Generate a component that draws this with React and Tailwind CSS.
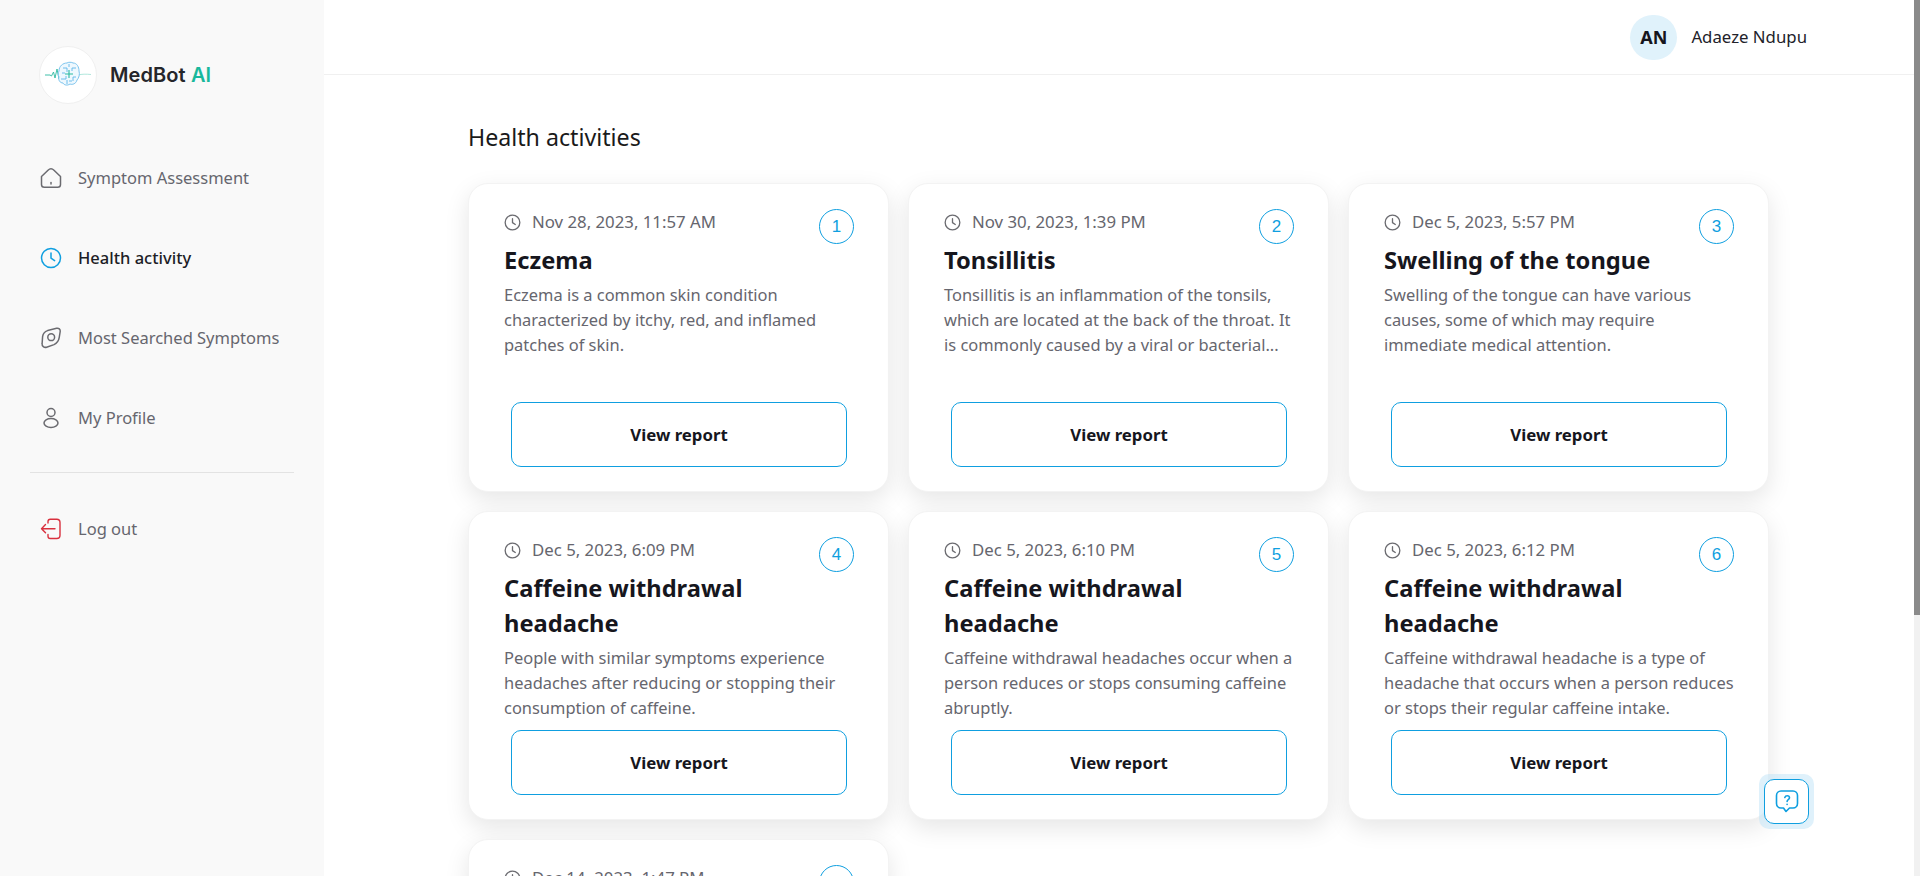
import React from "react";

const font = "font-['Noto_Sans','Open_Sans',sans-serif]";

const cards = [
  { n: 1, date: "Nov 28, 2023, 11:57 AM", title: "Eczema", text: "Eczema is a common skin condition characterized by itchy, red, and inflamed patches of skin." },
  { n: 2, date: "Nov 30, 2023, 1:39 PM", title: "Tonsillitis", text: "Tonsillitis is an inflammation of the tonsils, which are located at the back of the throat. It is commonly caused by a viral or bacterial..." },
  { n: 3, date: "Dec 5, 2023, 5:57 PM", title: "Swelling of the tongue", text: "Swelling of the tongue can have various causes, some of which may require immediate medical attention." },
  { n: 4, date: "Dec 5, 2023, 6:09 PM", title: "Caffeine withdrawal headache", text: "People with similar symptoms experience headaches after reducing or stopping their consumption of caffeine." },
  { n: 5, date: "Dec 5, 2023, 6:10 PM", title: "Caffeine withdrawal headache", text: "Caffeine withdrawal headaches occur when a person reduces or stops consuming caffeine abruptly." },
  { n: 6, date: "Dec 5, 2023, 6:12 PM", title: "Caffeine withdrawal headache", text: "Caffeine withdrawal headache is a type of headache that occurs when a person reduces or stops their regular caffeine intake." },
  { n: 7, date: "Dec 14, 2023, 1:47 PM", title: "", text: "" },
];

function Logo() {
  return (
    <svg width="46" height="30" viewBox="0 0 46 30" fill="none">
      <path d="M0 15h5l1.500 1 2-4 1.500 6 2-9 2 10 1-4" stroke="#2bb9a0" strokeWidth="0.9" />
      <path d="M33 15c4-1 8-1 13-.500" stroke="#8fdccd" strokeWidth="0.7" />
      <path d="M14 11c0-5 4-8 8-8 1-1 5-1 6 0 4 0 6 4 6 8 1 3 0 7-2 9-1 4-5 5-7 4-3 2-6 1-7-1-3 0-5-3-4-6-1-2-1-4 0-6z" stroke="#7cc4ee" strokeWidth="1" fill="#eef8fe" />
      <path d="M18 8h4v4M31 8h-4v3M16 19h5v-3M31 17h-3v4M24 4v3M22 24v-4M17 13h3M27 21h-3" stroke="#5db7ea" strokeWidth="0.9" />
      <path d="M24 10v8M20 14h8" stroke="#2bb9a0" strokeWidth="1.100" />
    </svg>
  );
}

const HomeIcon = () => (
  <svg width="22" height="22" viewBox="0 0 22 22" fill="none" stroke="#6b6b70" strokeWidth="1.5" strokeLinejoin="round" strokeLinecap="round">
    <path d="M1.500 9.500 8 3.200c1.800-1.700 4.200-1.700 6 0l6.500 6.300v8c0 1.700-1.200 2.800-2.800 2.800H4.300c-1.600 0-2.800-1.100-2.800-2.800z" />
    <path d="M11 15.500v1.500" />
  </svg>
);
const ClockIcon = ({ size = 22, color = "#0f9fe0", w = 1.5 }) => (
  <svg width={size} height={size} viewBox="0 0 22 22" fill="none" stroke={color} strokeWidth={w} strokeLinecap="round" strokeLinejoin="round">
    <circle cx="11" cy="11" r="9.500" />
    <path d="M11 6v5.200l3.600 2.400" />
  </svg>
);
const EyeIcon = () => (
  <svg width="22" height="22" viewBox="0 0 22 22" fill="none" stroke="#6b6b70" strokeWidth="1.5" strokeLinejoin="round">
    <path d="M2.600 9.600C3 6.800 4.800 4.600 7.600 3.600l9-2.300c2.200-.5 3.900 1.100 3.600 3.200l-1 6.200c-.5 3-2.300 5.600-5.200 6.900l-7.400 2.600c-2.500.7-4.800-1-4.500-3.500z" />
    <circle cx="11.200" cy="10.200" r="3.400" />
  </svg>
);
const UserIcon = () => (
  <svg width="22" height="22" viewBox="0 0 22 22" fill="none" stroke="#6b6b70" strokeWidth="1.5">
    <circle cx="11" cy="5.500" r="4" />
    <ellipse cx="11" cy="16" rx="7" ry="4.500" />
  </svg>
);
const LogoutIcon = () => (
  <svg width="22" height="22" viewBox="0 0 22 22" fill="none" stroke="#d9303e" strokeWidth="1.400" strokeLinecap="round" strokeLinejoin="round">
    <path d="M8 5V3.500C8 2.200 9 1.200 10.300 1.200h6.500c1.800 0 3.200 1.400 3.200 3.200v12.900c0 1.800-1.400 3.200-3.200 3.200h-6.500C9 20.500 8 19.500 8 18.200V16.500" />
    <path d="M15 10.700H1.500M5.500 6.600l-4 4.100 4 4.100" />
  </svg>
);

function NavItem({ icon, label, active }) {
  return (
    <div className="flex items-center gap-[16px] h-[24px]">
      <span className="w-[22px] h-[22px] flex items-center justify-center shrink-0">{icon}</span>
      <span className={active ? "text-[16.5px] text-[#1d1d26] font-medium" : "text-[16.5px] text-[#66666e]"}>{label}</span>
    </div>
  );
}

function Card({ c }) {
  return (
    <div className="relative h-[309px] rounded-[20px] bg-white border border-[#f3f3f3] shadow-[0_8px_24px_rgba(0,0,0,0.1)] pl-[35px] pr-[31px] pt-[26px] pb-[24px] flex flex-col">
      <span className="absolute top-[25px] right-[34px] w-[35px] h-[35px] rounded-full border border-[#0f9fe0] flex items-center justify-center text-[#0f9fe0] text-[17px] font-['Liberation_Sans',sans-serif]">{c.n}</span>
      <div className="flex items-center gap-[11px] h-[24px]">
        <ClockIcon size={17} color="#6b6b70" w={1.7} />
        <span className="text-[16.8px] text-[#66666e]">{c.date}</span>
      </div>
      <div className="mt-[9px] text-[23.7px] leading-[35px] font-bold text-[#16161d] pr-[44px]">{c.title}</div>
      <p className="text-[16.45px] leading-[25px] text-[#66666e] mt-[4px]">{c.text}</p>
      <div className="mt-auto pl-[7px] pr-[10px]">
        <button className="w-full h-[65px] rounded-[10px] border border-[#0f9fe0] bg-white text-[16.8px] font-bold text-[#16161d]">View report</button>
      </div>
    </div>
  );
}

export default function App() {
  return (
    <div className={`flex h-screen overflow-hidden bg-white ${font}`}>
      <aside className="w-[324px] shrink-0 bg-[#f9f9f9] flex flex-col">
        <div className="pl-[39px] pt-[46px] flex items-center gap-[13px]">
          <div className="w-[58px] h-[58px] rounded-full bg-white border border-[#f0f0f0] flex items-center justify-center">
            <Logo />
          </div>
          <span className="text-[20px] font-semibold tracking-[0.1px] text-[#25262a] font-['Inter',sans-serif]">MedBot <span className="text-[#19b89c]">AI</span></span>
        </div>
        <nav className="pl-[40px] pt-[62px] flex flex-col gap-[56px]">
          <NavItem icon={<HomeIcon />} label="Symptom Assessment" />
          <NavItem active icon={<ClockIcon />} label="Health activity" />
          <NavItem icon={<EyeIcon />} label="Most Searched Symptoms" />
          <NavItem icon={<UserIcon />} label="My Profile" />
        </nav>
        <div className="ml-[30px] w-[264px] h-px bg-[#e3e3e3] mt-[42px]" />
        <div className="pl-[40px] mt-[44px]">
          <NavItem icon={<LogoutIcon />} label="Log out" />
        </div>
      </aside>
      <div className="flex-1 min-w-0 flex flex-col">
        <header className="h-[75px] shrink-0 border-b border-[#f0f0f0] flex items-center justify-end pr-[107px] gap-[14px]">
          <span className="w-[47px] h-[45px] rounded-full bg-[#e0f2fb] flex items-center justify-center text-[18px] font-bold text-[#16161d]">AN</span>
          <span className="text-[16.8px] text-[#22222a]">Adaeze Ndupu</span>
        </header>
        <main className="flex-1 min-h-0 overflow-hidden pl-[144px] pr-[145px] pt-[46px]">
          <h1 className="text-[23.2px] leading-[32px] text-[#1a1a1a] mb-[30px]">Health activities</h1>
          <div className="grid grid-cols-3 gap-[19px]">
            {cards.map((c) => <Card key={c.n} c={c} />)}
          </div>
        </main>
      </div>
      <div className="w-[6px] shrink-0 bg-[#f1f1f1]">
        <div className="h-[615px] bg-[#8a8a8a]" />
      </div>
      <div className="fixed left-[1759px] top-[774px] w-[55px] h-[55px] rounded-[10px] bg-[#bfe4f7]/50 flex items-center justify-center">
        <div className="w-[45px] h-[45px] rounded-[10px] bg-white border border-[#0f9fe0] flex items-center justify-center">
          <svg width="26" height="26" viewBox="0 0 26 26" fill="none" stroke="#0f9fe0" strokeWidth="1.600" strokeLinecap="round" strokeLinejoin="round">
            <path d="M7 2h12c2.500 0 4.500 2 4.500 4.500v8c0 2.500-2 4.500-4.500 4.500h-3.500l-3.500 3.500-2.500-3.500H7c-2.500 0-4.500-2-4.500-4.500v-8C2.500 4 4.500 2 7 2z" />
            <path d="M10.800 8.500c.4-1.200 1.300-1.800 2.400-1.800 1.300 0 2.300.9 2.300 2.100 0 1.800-2.400 1.900-2.400 3.600M13.100 15.200v.2" />
          </svg>
        </div>
      </div>
    </div>
  );
}
